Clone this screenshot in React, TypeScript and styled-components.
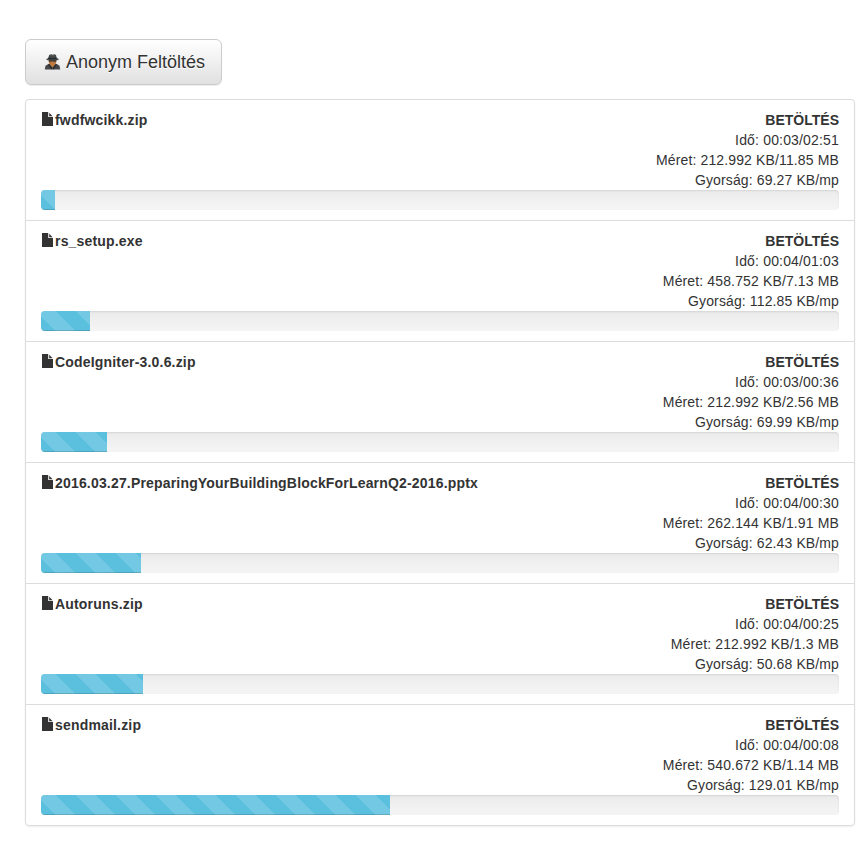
import React from 'react';
import styled, { createGlobalStyle } from 'styled-components';

const GlobalStyle = createGlobalStyle`
  *, *::before, *::after { box-sizing: border-box; }
  body {
    margin: 0;
    background: #fff;
    color: #333;
    font: 14px/20px "Liberation Sans", Arial, sans-serif;
  }
`;

const Page = styled.main`
  padding: 39px 8px 16px 25px;
`;

const UploadButton = styled.button`
  display: flex;
  align-items: center;
  gap: 5px;
  width: 197px;
  height: 46px;
  margin: 0 0 14px;
  padding: 0 0 0 18px;
  border: 1px solid #ccc;
  border-radius: 6px;
  background: linear-gradient(#fff, #e0e0e0);
  box-shadow: inset 0 1px 0 rgba(255, 255, 255, 0.15), 0 1px 1px rgba(0, 0, 0, 0.075);
  color: #333;
  font: 18px/24px "Liberation Sans", Arial, sans-serif;
  text-shadow: 0 1px 0 #fff;
  white-space: nowrap;
`;

const List = styled.ul`
  list-style: none;
  margin: 0;
  padding: 0;
  border: 1px solid #ddd;
  border-radius: 4px;
  box-shadow: 0 1px 2px rgba(0, 0, 0, 0.075);
`;

const Item = styled.li`
  padding: 10px 15px;
  & + & { border-top: 1px solid #ddd; }
`;

const Details = styled.div`
  display: flex;
  justify-content: space-between;
  align-items: flex-start;
`;

const FileName = styled.strong`
  display: flex;
  align-items: flex-start;
  gap: 2px;
  padding-left: 1px;
  letter-spacing: 0.178px;
`;

const Stats = styled.div`
  text-align: right;
`;

const Stat = styled.div<{ $spacing: number }>`
  letter-spacing: ${(p) => p.$spacing}px;
`;

const Track = styled.div`
  height: 20px;
  overflow: hidden;
  border-radius: 4px;
  background: linear-gradient(#ebebeb, #f5f5f5);
  box-shadow: inset 0 1px 2px rgba(0, 0, 0, 0.1);
`;

const Bar = styled.div<{ $width: number }>`
  width: ${(p) => p.$width}px;
  height: 100%;
  background-color: #5bc0de;
  background-image: linear-gradient(
    45deg,
    rgba(255, 255, 255, 0.15) 25%,
    transparent 25%,
    transparent 50%,
    rgba(255, 255, 255, 0.15) 50%,
    rgba(255, 255, 255, 0.15) 75%,
    transparent 75%,
    transparent
  );
  background-size: 40px 40px;
  background-position: -5px 0;
  box-shadow: inset 0 -1px 0 rgba(0, 0, 0, 0.15);
`;

const FileSvg = styled.svg`
  display: block;
  flex: none;
  margin-top: 2px;
`;

const FileIcon = () => (
  <FileSvg width="11" height="14" viewBox="0 0 11 14" fill="#333">
    <path d="M0 0H6.2V5H11V14H0Z" />
    <path d="M7.2 0.8L10.6 4.2H7.2Z" />
  </FileSvg>
);

const AgentIcon = () => (
  <svg width="17" height="16" viewBox="0 0 16 16">
    <path d="M0.3 15.5L1 11.8L3.5 10.2L6 9.5H10L12.7 10.2L15 11.8L15.7 15.5Z" fill="#45474a" />
    <path d="M4.3 5.5H11.7V9L10.3 11.5L8 14L5.7 11.5L4.3 9Z" fill="#bd7a43" />
    <path d="M4.3 6H11.8V7.8H9L8 7.2L7 7.8H4.3Z" fill="#49372d" />
    <path d="M5.3 10.5L8 14L7 15.5L3.3 10.2ZM10.7 10.5L8 14L9 15.5L12.7 10.2Z" fill="#292c2e" />
    <path d="M3.8 4L4.6 1L6.8 0.2L8 0.8L10 0.2L11.5 1L12.2 4L14 4.8V6L11 6.6H5L2 6V5Z" fill="#45484a" />
    <path d="M4 3.6Q8 5 12 3.6V4.7Q8 5.7 3.8 4.7Z" fill="#222527" />
    <path d="M5.5 1.5L7 1L8 1.7L10 1.1" fill="none" stroke="#66696b" strokeWidth="0.6" />
  </svg>
);

const files = [
  { name: 'fwdfwcikk.zip', time: '00:03/02:51', size: '212.992 KB/11.85 MB', speed: '69.27', width: 14 },
  { name: 'rs_setup.exe', time: '00:04/01:03', size: '458.752 KB/7.13 MB', speed: '112.85', width: 49 },
  { name: 'CodeIgniter-3.0.6.zip', time: '00:03/00:36', size: '212.992 KB/2.56 MB', speed: '69.99', width: 66 },
  { name: '2016.03.27.PreparingYourBuildingBlockForLearnQ2-2016.pptx', time: '00:04/00:30', size: '262.144 KB/1.91 MB', speed: '62.43', width: 100 },
  { name: 'Autoruns.zip', time: '00:04/00:25', size: '212.992 KB/1.3 MB', speed: '50.68', width: 102 },
  { name: 'sendmail.zip', time: '00:04/00:08', size: '540.672 KB/1.14 MB', speed: '129.01', width: 349 },
];

export default function App() {
  return (
    <>
      <GlobalStyle />
      <Page>
        <UploadButton type="button">
          <AgentIcon />
          Anonym Feltöltés
        </UploadButton>
        <List>
          {files.map((f) => (
            <Item key={f.name}>
              <Details>
                <FileName>
                  <FileIcon />
                  {f.name}
                </FileName>
                <Stats>
                  <strong>BETÖLTÉS</strong>
                  <Stat $spacing={0.17}>Idő: {f.time}</Stat>
                  <Stat $spacing={0.135}>Méret: {f.size}</Stat>
                  <Stat $spacing={0.12}>Gyorság: {f.speed} KB/mp</Stat>
                </Stats>
              </Details>
              <Track>
                <Bar $width={f.width} />
              </Track>
            </Item>
          ))}
        </List>
      </Page>
    </>
  );
}
